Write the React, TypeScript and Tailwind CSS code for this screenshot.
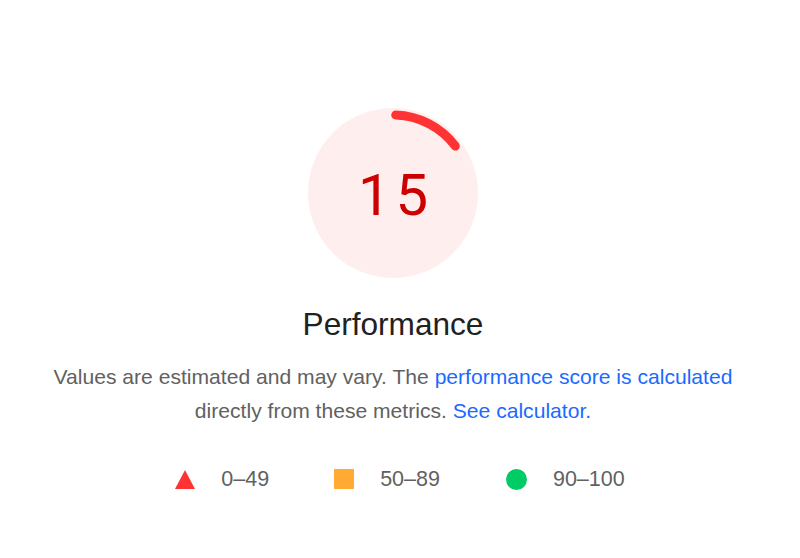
import React from "react";

function Gauge() {
  const cx = 85;
  const cy = 85;
  const r = 78;
  const a0 = (2 * Math.PI) / 180;
  const a1 = (53 * Math.PI) / 180;
  const x0 = cx + r * Math.sin(a0);
  const y0 = cy - r * Math.cos(a0);
  const x1 = cx + r * Math.sin(a1);
  const y1 = cy - r * Math.cos(a1);
  return (
    <div className="relative w-[170px] h-[170px]">
      <svg width="170" height="170" viewBox="0 0 170 170" className="absolute inset-0">
        <circle cx={cx} cy={cy} r="85" fill="#ffeeee" />
        <path
          d={`M ${x0} ${y0} A ${r} ${r} 0 0 1 ${x1} ${y1}`}
          fill="none"
          stroke="#ff3333"
          strokeWidth="9"
          strokeLinecap="round"
        />
      </svg>
      <div className="absolute inset-0 flex items-center justify-center pt-[4px]">
        <span className="text-[58px] leading-none text-[#cc0000] tracking-[5px] pl-[5px] font-['Roboto',sans-serif]">
          15
        </span>
      </div>
    </div>
  );
}

export default function App() {
  return (
    <div className="w-[800px] h-[558px] bg-white font-['Liberation_Sans',Arial,sans-serif]">
      <div className="w-[786px] flex flex-col items-center pt-[108px]">
        <Gauge />
        <div className="mt-[26px] text-[31.6px] leading-[40px] text-[#212121]">Performance</div>
        <p className="mt-[16px] text-[21.1px] leading-[34px] text-[#616161] text-center">
          Values are estimated and may vary. The{" "}
          <span className="text-[#1a6aff]">performance score is calculated</span>
          <br />
          directly from these metrics.{" "}
          <span className="text-[#1a6aff]">See calculator.</span>
        </p>
      </div>
      <div className="flex items-center justify-center mt-[37px] text-[21.5px] leading-[28px] text-[#616161]">
        <div className="flex items-center">
          <svg width="20" height="19" viewBox="0 0 20 19">
            <polygon points="10,0 20,19 0,19" fill="#ff3333" />
          </svg>
          <span className="ml-[26px]">0–49</span>
        </div>
        <div className="flex items-center ml-[65px]">
          <div className="w-[20px] h-[20px] bg-[#ffaa33]" />
          <span className="ml-[26px]">50–89</span>
        </div>
        <div className="flex items-center ml-[66px]">
          <div className="w-[21px] h-[21px] rounded-full bg-[#00cc66]" />
          <span className="ml-[26px]">90–100</span>
        </div>
      </div>
    </div>
  );
}
